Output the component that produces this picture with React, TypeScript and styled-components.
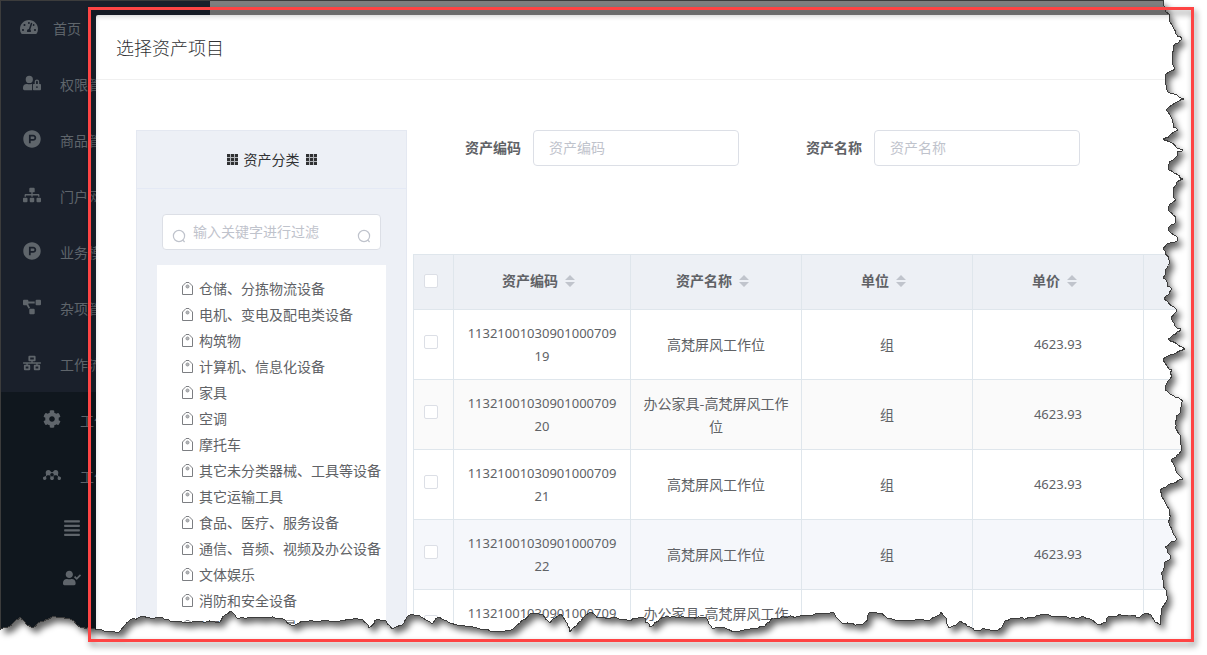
import React from "react";
import styled, { createGlobalStyle } from "styled-components";
import {
  FaTachometerAlt, FaUserLock, FaProductHunt, FaSitemap, FaProjectDiagram,
  FaNetworkWired, FaCog, FaMendeley, FaAlignJustify, FaUserCheck, FaUserTag,
} from "react-icons/fa";

const Global = createGlobalStyle`
  *, *::before, *::after { box-sizing: border-box; }
  body {
    margin: 0;
    background: #fff;
    color: #606266;
    font: 14px/23px "Noto Sans CJK SC", sans-serif;
  }
  input { font-family: inherit; }
`;

const Screen = styled.div`
  position: relative;
  display: flex;
  height: 100vh;
  overflow: hidden;
  background: #7f7f7f;
`;

/* ---------- side menu ---------- */
const Sidebar = styled.nav`
  flex: 0 0 210px;
  background: #1a202b;
`;
const MenuList = styled.ul<{ $dark?: boolean }>`
  margin: 0;
  padding: 0;
  list-style: none;
  background: ${(p) => (p.$dark ? "#10171e" : "transparent")};
`;
const MenuLink = styled.a<{ $indent: number; $height?: number; $gap?: number }>`
  display: flex;
  align-items: center;
  gap: ${(p) => p.$gap ?? 19}px;
  height: ${(p) => p.$height ?? 56}px;
  padding-left: ${(p) => p.$indent}px;
  color: #5f656b;
  text-decoration: none;
  white-space: nowrap;
  svg { flex: none; width: 18px; height: 18px; margin-bottom: 2px; }
`;

/* ---------- dialog ---------- */
const Dialog = styled.section`
  position: absolute;
  inset: 15px 0 0 96px;
  overflow: hidden;
  background: #fff;
  border-radius: 2px;
`;
const DialogHeader = styled.header`
  padding: 20px;
  border-bottom: 1px solid #f0f0f0;
`;
const DialogTitle = styled.h1`
  margin: 0;
  color: #303133;
  font-size: 18px;
  font-weight: 300;
  line-height: 24px;
`;
const DialogBody = styled.div`
  display: flex;
  align-items: flex-start;
  gap: 6px;
  padding: 50px 0 0 40px;
`;

const Card = styled.aside`
  flex: 0 0 271px;
  background: #edf0f6;
  border: 1px solid #e4e8f1;
`;
const CardHeader = styled.h2`
  display: flex;
  align-items: center;
  justify-content: center;
  gap: 6px;
  height: 58px;
  margin: 0;
  border-bottom: 1px solid #e4e9f5;
  color: #303133;
  font-size: 14px;
  font-weight: 400;
`;
const CardBody = styled.div`
  padding: 25px 20px 20px;
`;
const TextInput = styled.input<{ $search?: boolean }>`
  width: ${(p) => (p.$search ? "100%" : "206px")};
  height: 36px;
  padding: 0 ${(p) => (p.$search ? 30 : 15)}px 2px;
  border: 1px solid #dcdfe6;
  border-radius: 4px;
  background: #fff;
  color: #606266;
  font-size: 14px;
  outline: none;
  &::placeholder { color: #bfc3cc; opacity: 1; }
`;
const SearchBox = styled.label`
  position: relative;
  display: block;
  margin: 0 5px 15px;
`;
const SearchIconSlot = styled.span<{ $side: "left" | "right" }>`
  position: absolute;
  top: 15px;
  ${(p) => p.$side}: 10px;
  display: flex;
`;
const Tree = styled.ul`
  margin: 0;
  padding: 10px 0 40px 25px;
  list-style: none;
  background: #fff;
`;
const TreeItem = styled.li`
  display: flex;
  align-items: center;
  gap: 6px;
  height: 26px;
  white-space: nowrap;
`;

const Content = styled.div`
  flex: 1;
  min-width: 0;
  overflow: hidden;
`;
const FilterForm = styled.form`
  display: flex;
  gap: 67px;
  margin-bottom: 88px;
  padding-left: 52px;
`;
const Field = styled.label`
  display: flex;
  align-items: center;
  gap: 12px;
  font-weight: 700;
  white-space: nowrap;
`;
const FieldName = styled.span`
  padding-bottom: 2px;
`;

const Table = styled.table`
  width: 901px;
  table-layout: fixed;
  border-collapse: separate;
  border-spacing: 0;
  border-top: 1px solid #dfe6ec;
  border-left: 1px solid #dfe6ec;
`;
const HeadCell = styled.th`
  height: 55px;
  padding: 0 10px 3px;
  border-right: 1px solid #dfe6ec;
  border-bottom: 1px solid #dfe6ec;
  background: #edf0f5;
  text-align: left;
`;
const HeadLabel = styled.div`
  display: flex;
  align-items: center;
  justify-content: center;
  gap: 7px;
  padding-right: 7px;
`;
const Row = styled.tr<{ $bg: string }>`
  background: ${(p) => p.$bg};
`;
const Cell = styled.td<{ $digits?: boolean; $check?: boolean }>`
  height: 70px;
  padding: 0 10px ${(p) => (p.$check ? 5 : 0)}px;
  border-right: 1px solid #dfe6ec;
  border-bottom: 1px solid #dfe6ec;
  text-align: ${(p) => (p.$check ? "left" : "center")};
  word-break: break-all;
  ${(p) => p.$digits && 'font-family: "Noto Sans", sans-serif; font-size: 13px;'}
`;
const Checkbox = styled.input`
  display: block;
  width: 14px;
  height: 14px;
  margin: 0;
  appearance: none;
  border: 1px solid #dcdfe6;
  border-radius: 2px;
  background: #fff;
`;

/* ---------- decorations over the page ---------- */
const TornEdge = styled.svg`
  position: absolute;
  inset: 0;
  width: 100%;
  height: 100%;
  pointer-events: none;
`;
const RedFrame = styled.div`
  position: absolute;
  inset: 7px 13px 13px 88px;
  border: 3px solid #fe4444;
  filter: drop-shadow(2px 4px 3px rgba(0, 0, 0, 0.45));
  pointer-events: none;
`;

const SearchIcon = () => (
  <svg width="14" height="14" viewBox="0 0 14 14" fill="none" stroke="#bfc3cc" strokeWidth="1.2">
    <circle cx="7" cy="7" r="5.6" />
    <path d="M10.6 10.8 12.6 13" />
  </svg>
);
const GridIcon = () => (
  <svg width="11" height="11" viewBox="0 0 11 11" fill="#303133">
    <rect width="11" height="11" fillOpacity="0.3" />
    {[0, 4, 8].map((y) => [0, 4, 8].map((x) => <rect key={`${x}-${y}`} x={x} y={y} width="3" height="3" />))}
  </svg>
);
const TagIcon = () => (
  <svg width="11" height="14" viewBox="0 0 11 14" fill="none" stroke="#7c7e82">
    <path d="M0.5 13.5V5L4 1.5H7L10.5 5V13.5Z" />
    <circle cx="5.5" cy="5.5" r="1.5" fill="#b4b6b9" stroke="#97999c" />
  </svg>
);
const SortIcon = () => (
  <svg width="10" height="12" viewBox="0 0 10 12" fill="#c0c4cc">
    <path d="M0 5 5 0 10 5ZM0 7H10L5 12Z" />
  </svg>
);

const mainMenu = [
  { text: "权限管理", Icon: FaUserLock },
  { text: "商品管理", Icon: FaProductHunt },
  { text: "门户网站", Icon: FaSitemap },
  { text: "业务模块", Icon: FaProductHunt },
  { text: "杂项管理", Icon: FaProjectDiagram },
  { text: "工作流程", Icon: FaNetworkWired },
];
const subMenu = [
  { text: "工作", Icon: FaCog },
  { text: "工作", Icon: FaMendeley },
];
const leafMenu = [FaAlignJustify, FaUserCheck, FaUserTag];

const categories = [
  "仓储、分拣物流设备", "电机、变电及配电类设备", "构筑物", "计算机、信息化设备",
  "家具", "空调", "摩托车", "其它未分类器械、工具等设备", "其它运输工具",
  "食品、医疗、服务设备", "通信、音频、视频及办公设备", "文体娱乐", "消防和安全设备", "仪器、仪表及量具",
];

const columns = ["资产编码", "资产名称", "单位", "单价"];
const rows = [
  { code: "1132100103090100070919", name: "高梵屏风工作位", bg: "#fff" },
  { code: "1132100103090100070920", name: "办公家具-高梵屏风工作位", bg: "#fafafa" },
  { code: "1132100103090100070921", name: "高梵屏风工作位", bg: "#fff" },
  { code: "1132100103090100070922", name: "高梵屏风工作位", bg: "#f5f7fb" },
  { code: "1132100103090100070923", name: "办公家具-高梵屏风工作位", bg: "#fff" },
];

/* Torn outline, from the top right corner down and then leftwards. */
const tear: [number, number][] = [
  [1163, 0.5], [1165, 7], [1166, 12], [1170, 15], [1169, 21], [1173, 27], [1176, 34], [1182, 39], [1175, 44],
  [1172, 53], [1172, 63], [1175, 69], [1165, 75], [1165, 82], [1168, 92], [1184, 99], [1172, 105], [1166, 110],
  [1172, 119], [1173, 127], [1178, 130], [1170, 135], [1163, 139], [1183, 150], [1177, 152], [1177, 156],
  [1173, 160], [1169, 164], [1169, 170], [1183, 179], [1177, 182], [1176, 185], [1173, 190], [1173, 197],
  [1176, 200], [1170, 204], [1168, 210], [1176, 217], [1176, 222], [1168, 228], [1174, 235], [1178, 240],
  [1167, 244], [1163, 249], [1170, 261], [1167, 268], [1163, 278], [1167, 282], [1167, 286], [1172, 289],
  [1164, 299], [1177, 311], [1171, 318], [1175, 326], [1181, 329], [1177, 332], [1168, 339], [1185, 349],
  [1170, 355], [1163, 360], [1167, 366], [1172, 370], [1170, 373], [1172, 376], [1170, 379], [1167, 383],
  [1165, 390], [1175, 397], [1183, 401], [1181, 407], [1181, 412], [1176, 416], [1175, 428], [1180, 435],
  [1181, 445], [1182, 449], [1177, 455], [1171, 460], [1175, 467], [1177, 473], [1183, 479], [1170, 484],
  [1160, 490], [1162, 497], [1167, 506], [1170, 511], [1169, 523], [1173, 533], [1177, 539], [1165, 547],
  [1170, 555], [1171, 558], [1165, 562], [1164, 568], [1161, 573], [1163, 580], [1163, 584], [1167, 591],
  [1167, 600], [1162, 608], [1160, 617], [1160, 625], [1155, 622], [1151, 615], [1144, 614], [1140, 617],
  [1128, 615], [1108, 617], [1106, 622], [1098, 625], [1090, 619], [1082, 616], [1077, 619], [1067, 617],
  [1053, 617], [1047, 614], [1040, 615], [1033, 618], [1010, 619], [1005, 621], [1002, 627], [997, 631],
  [983, 628], [977, 631], [967, 626], [960, 621], [953, 626], [949, 628], [946, 618], [941, 612], [937, 616],
  [927, 621], [920, 619], [907, 621], [888, 619], [882, 613], [869, 613], [868, 620], [862, 625], [842, 623],
  [837, 618], [834, 613], [820, 614], [800, 616], [773, 618], [765, 626], [750, 629], [733, 632], [723, 627],
  [712, 628], [705, 617], [687, 618], [673, 616], [660, 619], [650, 627], [643, 617], [627, 620], [617, 618],
  [597, 618], [591, 612], [583, 618], [577, 625], [570, 632], [565, 620], [561, 614], [555, 618], [550, 623],
  [543, 615], [537, 613], [530, 614], [520, 623], [511, 630], [490, 631], [473, 627], [460, 626], [447, 621],
  [439, 617], [432, 624], [423, 618], [419, 615], [408, 616], [402, 625], [392, 629], [385, 620], [378, 619],
  [369, 628], [363, 620], [353, 619], [340, 621], [302, 621], [293, 626], [283, 619], [267, 617], [238, 619],
  [231, 611], [225, 615], [220, 622], [203, 622], [172, 622], [168, 619], [150, 618], [143, 616], [130, 620],
  [118, 633], [95, 629], [80, 627], [72, 620], [63, 617], [52, 617], [40, 622], [32, 628], [25, 622],
  [20, 617], [13, 623], [7, 628], [0.5, 629],
];

/* Adds small steps between the outline points so the edge looks like ripped paper. */
const roughen = (points: [number, number][]) => {
  let seed = 7;
  const jitter = () => {
    seed = (seed * 16807) % 2147483647;
    return (seed / 2147483647 - 0.5) * 2;
  };
  return points.flatMap(([x, y], i) => {
    const next = points[i + 1];
    if (!next) return [`${x} ${y}`];
    const n = Math.max(1, Math.round(Math.hypot(next[0] - x, next[1] - y) / 3));
    return Array.from({ length: n }, (_, k) => {
      const px = x + ((next[0] - x) * k) / n + (k ? jitter() : 0);
      const py = y + ((next[1] - y) * k) / n + (k ? jitter() : 0);
      return `${px.toFixed(1)} ${py.toFixed(1)}`;
    });
  });
};
const paper = `M0.5 0.5L${roughen(tear).join("L")}Z`;
const outside = `M0 0H1207V655H0Z${paper}`;

const SearchField = () => (
  <SearchBox>
    <SearchIconSlot $side="left"><SearchIcon /></SearchIconSlot>
    <TextInput $search type="text" placeholder="输入关键字进行过滤" aria-label="输入关键字进行过滤" />
    <SearchIconSlot $side="right"><SearchIcon /></SearchIconSlot>
  </SearchBox>
);

export default function App() {
  return (
    <>
      <Global />
      <Screen>
        <Sidebar>
          <MenuList>
            <li><MenuLink href="#" $indent={20} $gap={15}><FaTachometerAlt />首页</MenuLink></li>
            {mainMenu.map(({ text, Icon }) => (
              <li key={text}><MenuLink href="#" $indent={23}><Icon />{text}</MenuLink></li>
            ))}
          </MenuList>
          <MenuList $dark>
            {subMenu.map(({ text, Icon }, i) => (
              <li key={i}><MenuLink href="#" $indent={43}><Icon />{text}</MenuLink></li>
            ))}
            {leafMenu.map((Icon, i) => (
              <li key={i}><MenuLink href="#" $indent={63} $height={50}><Icon /></MenuLink></li>
            ))}
          </MenuList>
        </Sidebar>

        <Dialog role="dialog" aria-labelledby="dialog-title">
          <DialogHeader><DialogTitle id="dialog-title">选择资产项目</DialogTitle></DialogHeader>
          <DialogBody>
            <Card>
              <CardHeader><GridIcon />资产分类<GridIcon /></CardHeader>
              <CardBody>
                <SearchField />
                <Tree>
                  {categories.map((name) => (
                    <TreeItem key={name}><TagIcon />{name}</TreeItem>
                  ))}
                </Tree>
              </CardBody>
            </Card>
            <Content>
              <FilterForm>
                <Field><FieldName>资产编码</FieldName><TextInput type="text" placeholder="资产编码" /></Field>
                <Field><FieldName>资产名称</FieldName><TextInput type="text" placeholder="资产名称" /></Field>
              </FilterForm>
              <Table>
                <colgroup>
                  <col style={{ width: 40 }} />
                  <col style={{ width: 177 }} />
                  {[0, 1, 2, 3].map((i) => <col key={i} style={{ width: 171 }} />)}
                </colgroup>
                <thead>
                  <tr>
                    <HeadCell><Checkbox type="checkbox" aria-label="全选" /></HeadCell>
                    {columns.map((name) => (
                      <HeadCell key={name}><HeadLabel>{name}<SortIcon /></HeadLabel></HeadCell>
                    ))}
                    <HeadCell />
                  </tr>
                </thead>
                <tbody>
                  {rows.map((row) => (
                    <Row key={row.code} $bg={row.bg}>
                      <Cell $check><Checkbox type="checkbox" aria-label={row.code} /></Cell>
                      <Cell $digits>{row.code}</Cell>
                      <Cell>{row.name}</Cell>
                      <Cell>组</Cell>
                      <Cell $digits>4623.93</Cell>
                      <Cell />
                    </Row>
                  ))}
                </tbody>
              </Table>
            </Content>
          </DialogBody>
        </Dialog>

        <TornEdge viewBox="0 0 1207 655" preserveAspectRatio="none" aria-hidden="true">
          <defs>
            <clipPath id="outside"><path d={outside} clipRule="evenodd" /></clipPath>
            <filter id="soft" x="-5%" y="-5%" width="110%" height="110%">
              <feGaussianBlur stdDeviation="3" />
            </filter>
          </defs>
          <path d={outside} fill="#fff" fillRule="evenodd" />
          <g clipPath="url(#outside)">
            <path d={paper} fill="#000" fillOpacity="0.6" filter="url(#soft)" transform="translate(4 5)" />
          </g>
          <path d={paper} fill="none" stroke="#3c3c3c" shapeRendering="crispEdges" />
        </TornEdge>
        <RedFrame />
      </Screen>
    </>
  );
}
